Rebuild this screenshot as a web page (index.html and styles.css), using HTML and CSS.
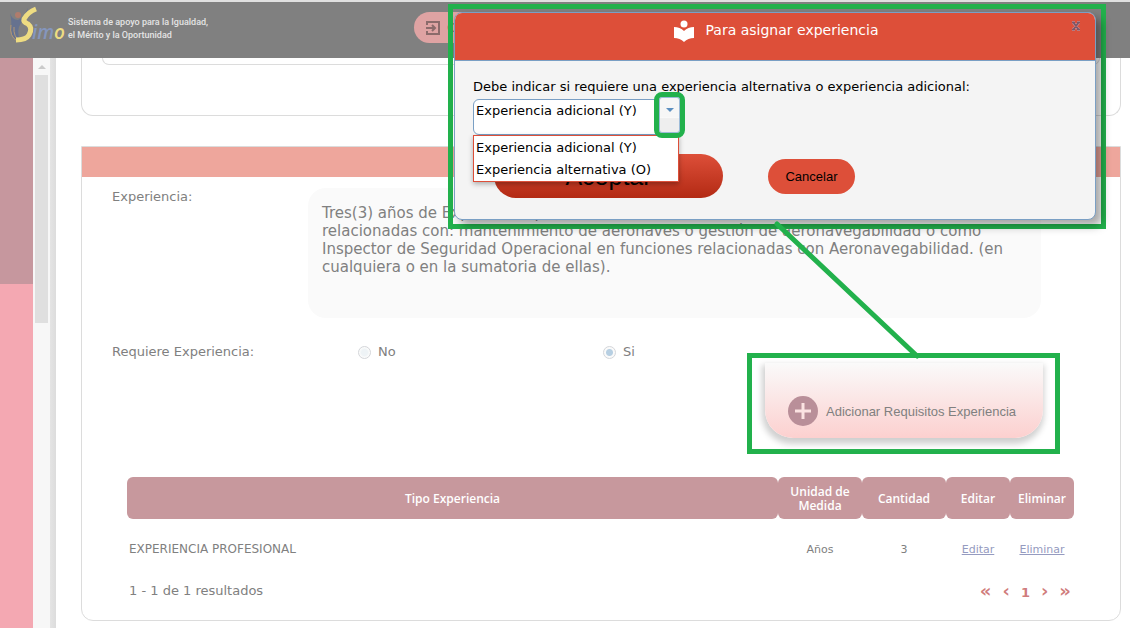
FILE: index.html
```html
<!DOCTYPE html>
<html lang="es">
<head>
    <meta charset="UTF-8">
    <meta name="viewport" content="width=device-width, initial-scale=1.0">
    <title>SIMO - Requisitos de experiencia</title>
    <link rel="stylesheet" href="styles.css">
</head>
<body>
    <header class="topbar">
        <svg class="logo" width="58" height="42" viewBox="0 0 58 42">
            <circle cx="10" cy="10" r="3" fill="#b07c6c"/>
            <path d="M2 8Q4 15 10 15Q16 12 20 3Q19 11 13 18Q8 25 12 36Q2 34 3 22Q4 17 2 8Z" fill="#66728f"/>
            <path d="M3 20Q1 31 9 36M6 22Q5 31 12 37" fill="none" stroke="#b39876" stroke-width="1"/>
            <path d="M28 4Q20 7 16 14Q15 17 20 19Q25 23 21 30Q18 35 8 35" fill="none" stroke="#eedc82" stroke-width="5"/>
            <text x="24" y="34" class="logo-text"><tspan fill="#8596bd">im</tspan><tspan fill="#eedc82">o</tspan></text>
        </svg>
        <p class="slogan">Sistema de apoyo para la Igualdad,<br>el Mérito y la Oportunidad</p>
        <button class="session-btn">
            <svg width="16" height="16" viewBox="0 0 16 16" fill="none" stroke="#8b6b6b" stroke-width="2">
                <path d="M2 5V2H14V14H2V11M1 8H10M7 5L10 8L7 11"/>
            </svg>
            Cerrar Sesión
        </button>
    </header>

    <div class="layout">
        <aside class="sidebar"><div class="sidebar-menu"></div></aside>
        <div class="scrollbar">
            <div class="scroll-up"></div>
            <div class="scroll-thumb"></div>
        </div>
        <div class="divider"></div>

        <main class="content">
            <section class="panel panel-prev">
                <div class="inner-panel"></div>
            </section>

            <section class="panel panel-exp">
                <div class="panel-bar"></div>

                <div class="form-row">
                    <label class="row-label" for="experiencia">Experiencia:</label>
                    <textarea class="exp-text" id="experiencia">Tres(3) años de Experiencia profesional en funciones
relacionadas con: mantenimiento de aeronaves o gestión de aeronavegabilidad o como
Inspector de Seguridad Operacional en funciones relacionadas con Aeronavegabilidad. (en
cualquiera o en la sumatoria de ellas).</textarea>
                </div>

                <div class="form-row form-row-radio">
                    <span class="row-label">Requiere Experiencia:</span>
                    <label class="radio"><input type="radio" name="requiere">No</label>
                    <label class="radio"><input type="radio" name="requiere" checked>Si</label>
                    <div class="mark-box">
                        <button class="add-btn">
                            <svg width="30" height="30" viewBox="0 0 30 30">
                                <circle cx="15" cy="15" r="15" fill="#b98f99"/>
                                <path d="M15 7V23M7 15H23" stroke="#fbe3e2" stroke-width="3"/>
                            </svg>
                            Adicionar Requisitos Experiencia
                        </button>
                    </div>
                </div>

                <div class="results">
                    <table class="table">
                        <thead>
                            <tr>
                                <th>Tipo Experiencia</th>
                                <th class="col-m">Unidad de Medida</th>
                                <th class="col-m">Cantidad</th>
                                <th class="col-s">Editar</th>
                                <th class="col-s">Eliminar</th>
                            </tr>
                        </thead>
                        <tbody>
                            <tr>
                                <td>EXPERIENCIA PROFESIONAL</td>
                                <td>Años</td>
                                <td>3</td>
                                <td><a href="#">Editar</a></td>
                                <td><a href="#">Eliminar</a></td>
                            </tr>
                        </tbody>
                    </table>
                    <div class="table-footer">
                        <span>1 - 1 de 1 resultados</span>
                        <nav class="pager">
                            <a href="#">«</a>
                            <a href="#">‹</a>
                            <a href="#" class="current">1</a>
                            <a href="#">›</a>
                            <a href="#">»</a>
                        </nav>
                    </div>
                </div>
            </section>
        </main>
    </div>

    <!-- Diálogo -->
    <div class="dialog-mark">
        <div class="dialog" role="dialog">
            <div class="dialog-header">
                <svg width="20" height="22" viewBox="0 0 20 22" fill="#fff">
                    <circle cx="10" cy="4" r="3.5"/>
                    <path d="M0 7Q6 7 10 11Q14 7 20 7V18Q14 18 10 22Q6 18 0 18Z"/>
                </svg>
                <h2>Para asignar experiencia</h2>
                <button class="close-btn" aria-label="Cerrar">
                    <svg width="10" height="10" viewBox="0 0 10 10" fill="none">
                        <path d="M1 1H4M6 1H9M1 9H4M6 9H9M2 1L8 9M8 1L2 9" stroke="#c98a8c" stroke-width="3"/>
                        <path d="M1 1.5H4M6 1.5H9M1 8.5H4M6 8.5H9M2 1L8 9M8 1L2 9" stroke="#7c5668" stroke-width="1.6"/>
                    </svg>
                </button>
            </div>
            <div class="dialog-body">
                <label class="dialog-label" for="tipo">Debe indicar si requiere una experiencia alternativa o experiencia adicional:</label>
                <div class="combo">
                    <select class="combo-select" id="tipo">
                        <option>Experiencia adicional (Y)</option>
                        <option>Experiencia alternativa (O)</option>
                    </select>
                    <ul class="combo-list">
                        <li>Experiencia adicional (Y)</li>
                        <li>Experiencia alternativa (O)</li>
                    </ul>
                    <span class="combo-arrow"></span>
                </div>
                <div class="dialog-actions">
                    <button class="accept-btn">Aceptar</button>
                    <button class="cancel-btn">Cancelar</button>
                </div>
            </div>
        </div>
        <svg class="connector" width="150" height="140" viewBox="0 0 150 140">
            <path d="M5 5L145 137" stroke="#22b14c" stroke-width="5" stroke-linecap="round"/>
        </svg>
    </div>
</body>
</html>
```

FILE: styles.css
```css
* {
    margin: 0;
    padding: 0;
    box-sizing: border-box;
}

body {
    font-family: Verdana, "DejaVu Sans", sans-serif;
    font-size: 13px;
    color: #808080;
    background: #fff;
    height: 100vh;
    display: flex;
    flex-direction: column;
    position: relative;
    overflow: hidden;
}

button {
    border: none;
    cursor: pointer;
    font-family: Arial, "Liberation Sans", sans-serif;
    font-size: 13px;
}

/* Cabecera */
.topbar {
    flex: none;
    display: flex;
    align-items: flex-start;
    height: 58px;
    padding: 5px 8px 0;
    background: linear-gradient(#e0e0e0 2px, #808080 2px);
}

.logo-text {
    font-family: "Open Sans", sans-serif;
    font-size: 19px;
    font-style: italic;
    font-weight: 600;
}

.slogan {
    width: 348px;
    padding: 11px 0 0 2px;
    font-family: Roboto, sans-serif;
    font-size: 9px;
    font-weight: 500;
    line-height: 13px;
    color: #e4e4e4;
}

.session-btn {
    display: flex;
    align-items: center;
    gap: 6px;
    height: 31px;
    margin-top: 7px;
    padding: 0 11px;
    border-radius: 16px;
    background: #dfa3a3;
    color: #8b6b6b;
}

.layout {
    flex: 1;
    display: flex;
    min-height: 0;
}

/* Menú lateral */
.sidebar {
    width: 33px;
    background: #f4a8b2;
}

.sidebar-menu {
    height: 226px;
    background: #c6979e;
}

.scrollbar {
    width: 17px;
    padding: 7px 2px;
    background: #f7f7f7;
}

.scroll-up {
    width: 8px;
    margin: 0 auto 6px;
    border: 4px solid transparent;
    border-top: none;
    border-bottom-color: #cacaca;
}

.scroll-thumb {
    height: 248px;
    background: #dfdfdf;
}

.divider {
    width: 6px;
    background: linear-gradient(to right, #e4e4e4, #dcdcdc);
}

.content {
    flex: 1;
    padding: 0 9px 0 25px;
}

.panel {
    border: 1px solid #dcdcdc;
}

.panel-prev {
    height: 58px;
    padding: 0 20px;
    border-top: none;
    border-radius: 0 0 12px 12px;
}

.inner-panel {
    height: 7px;
    border: 1px solid #dcdcdc;
    border-top: none;
    border-radius: 0 0 12px 12px;
}

.panel-exp {
    margin-top: 30px;
    padding-bottom: 18px;
    border-radius: 0 0 12px 12px;
}

.panel-bar {
    height: 30px;
    background: #eea69c;
}

/* Formulario */
.form-row {
    display: flex;
    align-items: flex-start;
    padding: 11px 60px 0 30px;
}

.row-label {
    flex: none;
    width: 196px;
    line-height: 18px;
}

.exp-text {
    flex: 1;
    height: 130px;
    margin-right: 19px;
    padding: 16px 14px;
    border: none;
    border-radius: 18px;
    background: #fafafa;
    font-family: inherit;
    font-size: 15px;
    line-height: 18px;
    color: #808080;
    resize: none;
}

.form-row-radio {
    padding-top: 25px;
}

.radio {
    display: flex;
    align-items: center;
    gap: 7px;
    width: 245px;
    line-height: 18px;
}

.radio input {
    appearance: none;
    width: 13px;
    height: 13px;
    border: 1px solid #d4d6da;
    border-radius: 50%;
    background: radial-gradient(circle, #eef3f6 3px, #fbfbfb 5px);
}

.radio input:checked {
    background: radial-gradient(circle, #b7cfe2 3px, #fafafa 4px);
}

.row-label + .radio {
    margin-left: 50px;
}

.radio + .radio {
    width: 144px;
}

.mark-box {
    flex: none;
    width: 313px;
    height: 101px;
    margin-top: 10px;
    margin-left: auto;
    padding: 5px 12px 0 13px;
    border: 5px solid #22b14c;
}

.add-btn {
    display: flex;
    align-items: center;
    gap: 8px;
    width: 100%;
    height: 75px;
    padding: 21px 23px 0;
    border-radius: 0 0 28px 28px;
    background: linear-gradient(#fafafa, #fcd0cf);
    box-shadow: -1px 4px 6px 2px #d0d0d0;
    color: #808080;
    white-space: nowrap;
}

/* Tabla */
.results {
    padding: 23px 46px 0 45px;
}

.table {
    width: 100%;
    table-layout: fixed;
    border-spacing: 0;
    font-size: 11px;
    text-align: center;
}

.table th {
    height: 42px;
    padding-top: 2px;
    border-radius: 6px;
    background: #c7989d;
    color: #fff;
    font-family: "Open Sans", sans-serif;
    font-size: 12px;
    font-weight: 600;
    line-height: 14px;
}

.col-m {
    width: 84px;
}

.col-s {
    width: 64px;
}

.table td {
    height: 60px;
}

.table td:first-child {
    padding-left: 2px;
    font-size: 12px;
    text-align: left;
}

.table a {
    color: #959bc0;
}

.table-footer {
    display: flex;
    justify-content: space-between;
    padding: 3px 3px 0 2px;
    line-height: 18px;
}

.pager {
    display: flex;
    gap: 11px;
    font-size: 18px;
    font-weight: bold;
}

.pager a {
    color: #d07c7c;
    text-decoration: none;
}

.pager .current {
    padding-top: 2px;
    font-size: 13px;
}

/* Diálogo */
.dialog-mark {
    position: absolute;
    top: 4px;
    right: 24px;
    width: 658px;
    border: 5px solid #22b14c;
    padding: 3px 5px 4px 1px;
}

.dialog {
    border: 1px solid #7a9fc4;
    border-radius: 8px;
    background: #f4f4f4;
    box-shadow: 6px 6px 10px rgba(0, 0, 0, 0.35);
    color: #000;
}

.dialog-header {
    display: flex;
    justify-content: center;
    gap: 12px;
    position: relative;
    height: 48px;
    padding: 7px 0 0 2px;
    border-bottom: 1px solid #7a9fc4;
    border-radius: 7px 7px 0 0;
    background: #dd4f39;
    color: #fff;
}

.dialog-header h2 {
    font-size: 14px;
    font-weight: normal;
    line-height: 20px;
}

.close-btn {
    position: absolute;
    top: 6px;
    right: 14px;
    width: 10px;
    height: 14px;
    background: none;
}

.dialog-body {
    padding: 17px 18px 21px;
}

.dialog-label {
    display: block;
    line-height: 18px;
}

.combo {
    position: relative;
    width: 207px;
    margin-top: 3px;
}

.combo-select {
    appearance: none;
    display: block;
    width: 100%;
    height: 36px;
    padding: 0 30px 14px 2px;
    border: 1px solid #7a9fc4;
    border-radius: 6px;
    background: #fff;
    font-family: inherit;
    font-size: 13px;
    color: #000;
}

.combo-arrow {
    position: absolute;
    top: -7px;
    right: -5px;
    width: 31px;
    height: 46px;
    border: 5px solid #22b14c;
    border-radius: 8px;
    background: linear-gradient(#f6f6f6 55%, #fff 55%, #eee 60%);
    box-shadow: inset 0 0 0 1px #9dbbd8;
    pointer-events: none;
}

.combo-arrow::after {
    content: '';
    position: absolute;
    top: 11px;
    left: 7px;
    border: 4px solid transparent;
    border-top-color: #5c8fc0;
    border-bottom: none;
}

.combo-list {
    position: absolute;
    top: 36px;
    left: 0;
    width: 206px;
    padding: 1px 2px 0;
    border: 1px solid #dd4f39;
    background: #fff;
    box-shadow: 0 2px 5px rgba(0, 0, 0, 0.3);
    list-style: none;
    line-height: 22px;
}

.dialog-actions {
    display: flex;
    align-items: center;
    gap: 45px;
    padding: 19px 0 0 21px;
}

.accept-btn {
    width: 229px;
    height: 44px;
    border-radius: 22px;
    background: linear-gradient(#dd4f39, #b32a14);
    font-size: 25px;
}

.cancel-btn {
    width: 87px;
    height: 35px;
    border-radius: 18px;
    background: #dd4f39;
}

/* Línea que une el diálogo con el botón */
.connector {
    position: absolute;
    top: 210px;
    left: 319px;
    fill: none;
    pointer-events: none;
}
```
